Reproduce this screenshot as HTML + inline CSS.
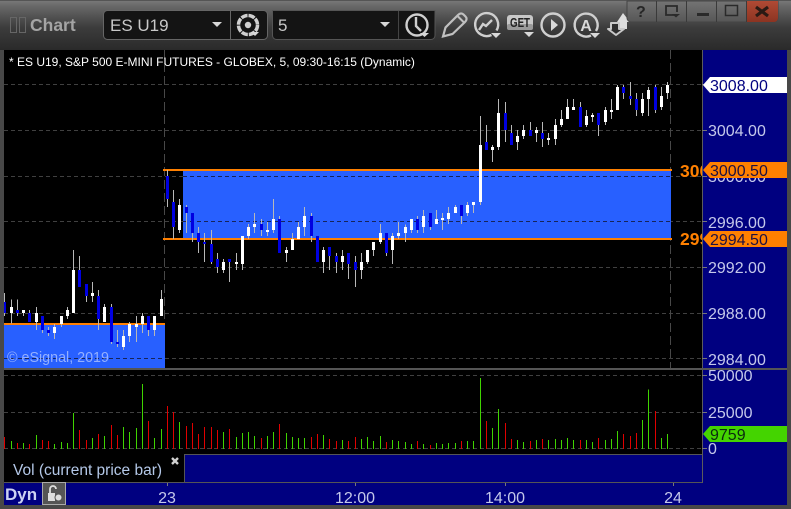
<!DOCTYPE html>
<html><head><meta charset="utf-8"><style>
html,body{margin:0;padding:0;background:#444;width:791px;height:509px;overflow:hidden}
svg{display:block}
text{font-family:"Liberation Sans",sans-serif}
.ax{font-size:16px;fill:#c4c8ea}
.ic{fill:none;stroke:#cfcfcf;stroke-width:2.4}
.ar{fill:#d8d8d8}
</style></head><body>
<svg width="791" height="509" viewBox="0 0 791 509" xmlns="http://www.w3.org/2000/svg">
<defs>
<linearGradient id="tb" x1="0" y1="0" x2="0" y2="1"><stop offset="0" stop-color="#7a7a7a"/><stop offset=".12" stop-color="#686868"/><stop offset=".55" stop-color="#3c3c3c"/><stop offset="1" stop-color="#2a2a2a"/></linearGradient>
<linearGradient id="wb" x1="0" y1="0" x2="0" y2="1"><stop offset="0" stop-color="#747474"/><stop offset="1" stop-color="#565656"/></linearGradient>
<linearGradient id="wr" x1="0" y1="0" x2="0" y2="1"><stop offset="0" stop-color="#b04a34"/><stop offset="1" stop-color="#8c3422"/></linearGradient>
<clipPath id="cc"><rect x="4" y="50" width="698" height="318"/></clipPath>
<clipPath id="cl"><rect x="670" y="150" width="32" height="100"/></clipPath>
</defs>
<rect width="791" height="509" fill="#484848"/>
<rect width="791" height="50" fill="url(#tb)"/>
<rect x="0" y="0" width="791" height="1" fill="#555"/>

<!-- title -->
<rect x="10.5" y="17.5" width="6" height="15" fill="none" stroke="#666"/>
<rect x="19.5" y="17.5" width="6" height="15" fill="none" stroke="#666"/>
<text x="30" y="31" font-size="17.5" font-weight="bold" fill="#a4a4a4">Chart</text>

<!-- combos -->
<rect x="103.5" y="10.5" width="164" height="29" rx="4" fill="#141414" stroke="#666"/>
<path d="M230.5 11V39" stroke="#666"/>
<text x="110" y="31" font-size="17" fill="#c8c8c8">ES U19</text>
<path d="M212 22h10l-5 5z" class="ar" fill="#bbb"/>
<path d="M272.500 10.500H435v25a4 4 0 0 1-4 4H276.500a4 4 0 0 1-4-4z" fill="#141414" stroke="#555"/>
<path d="M398.500 11V39" stroke="#444"/>
<text x="278" y="31" font-size="17" fill="#c8c8c8">5</text>
<path d="M380 22h10l-5 5z" class="ar"/>
<!-- gear -->
<circle cx="248" cy="25" r="9.500" fill="none" stroke="#d0d0d0" stroke-width="3.500" stroke-dasharray="6.500 1"/>
<circle cx="248" cy="25" r="3.200" fill="#d0d0d0"/>
<path d="M251 32h8l-4 4z" class="ar"/>
<!-- clock -->
<circle cx="417" cy="25" r="10.500" class="ic" stroke-width="3"/>
<path d="M416 17v9l5 5" class="ic"/>
<path d="M420 33h9l-4.500 4z" class="ar"/>
<!-- pencil -->
<path d="M443 36.500l2.500-9L458 15c2-2 4-2 5.500-.5l2 2c1.500 1.500 1.500 3.500-.5 5.500L452.500 34z" fill="none" stroke="#c0c0c0" stroke-width="2.200"/>
<path d="M457.500 16l7 7" fill="none" stroke="#c0c0c0" stroke-width="2"/>
<!-- chart circle -->
<path d="M496.500 30.500a11.500 11.500 0 1 0-5 4.500" class="ic" stroke-width="2.600"/>
<path d="M479 30l4-6 3 2 6-6" class="ic" stroke-width="2.200" stroke="#e8e8e8"/>
<path d="M491 33h10l-5 5z" class="ar"/>
<!-- GET -->
<rect x="507" y="15" width="26" height="15" rx="3" fill="#c8c8c8"/>
<rect x="507" y="24" width="26" height="6" rx="2" fill="#9a9a9a"/>
<text x="510" y="27" font-size="13" font-weight="bold" fill="#222" font-family="Liberation Mono" textLength="20" lengthAdjust="spacingAndGlyphs">GET</text>
<path d="M524 32h10l-5 5z" class="ar"/>
<!-- play -->
<circle cx="553" cy="25" r="11.500" class="ic" stroke-width="2.800"/>
<path d="M551 19l7 6-7 6z" fill="#d8d8d8"/>
<!-- A -->
<path d="M596 31a11.500 11.500 0 1 0-5 4.500" class="ic" stroke-width="2.600"/>
<text x="586" y="31" font-size="16" font-weight="bold" fill="#d8d8d8" text-anchor="middle">A</text>
<path d="M590 33h10l-5 5z" class="ar"/>
<!-- arrows -->
<path d="M617 22l6-9 7 9h-3v7h-8v-7z" fill="#ddd"/>
<path d="M611 23h8v6h5l-8 6-8-6h3z" fill="#2d2d2d" stroke="#c8c8c8" stroke-width="2" stroke-linejoin="round"/>

<!-- window buttons -->
<path d="M627 1H778V18a4 4 0 0 1-4 4H631a4 4 0 0 1-4-4z" fill="url(#wb)" stroke="#444"/>
<path d="M746 1H778V18a4 4 0 0 1-4 4H746z" fill="url(#wr)"/>
<path d="M656.500 1V22M686.500 1V22M716.500 1V22M746.500 1V22" stroke="#3a3a3a"/>
<text x="636" y="17" font-size="16" font-weight="bold" fill="#262626">?</text>
<path d="M677 15h-11V6h11v6" fill="none" stroke="#2a2a2a" stroke-width="1.800"/>
<path d="M672 14h8l-4 3.500z" fill="#2a2a2a"/>
<rect x="697" y="13" width="12" height="3" fill="#2a2a2a"/>
<rect x="725.500" y="5.500" width="12" height="10" fill="none" stroke="#2a2a2a" stroke-width="1.500"/>
<path d="M756 7l12 9M768 7l-12 9" stroke="#2a1a14" stroke-width="3.200"/>

<!-- chart area -->
<rect x="4" y="50" width="698" height="318" fill="#000"/>
<rect x="702" y="50" width="85" height="455" fill="#000080"/>
<rect x="4" y="368" width="698" height="86" fill="#000"/>

<g clip-path="url(#cc)" shape-rendering="crispEdges">
<path d="M4 84.500H702M4 130.500H702M4 176.500H702M4 221.500H702M4 267.500H702M4 313.500H702M4 358.500H702" stroke="#404040" stroke-dasharray="4 3"/>
<path d="M164.500 50V368M670.500 50V368" stroke="#484848" stroke-dasharray="9 4"/>
<rect x="183" y="171" width="488" height="68" fill="#2860ff"/>
<rect x="4" y="324" width="161" height="44" fill="#2860ff"/>
<path d="M183 176.500H671M183 221.500H671M4 358.500H165" stroke="#16245a" stroke-dasharray="4 3"/>
<rect x="163" y="169" width="509" height="2" fill="#ff8000"/>
<rect x="163" y="238" width="509" height="2" fill="#ff8000"/>
<rect x="4" y="323" width="161" height="2" fill="#ff8000"/>

<g transform="translate(0.16667,240) scale(.33333)">
<path d="M13 159V228M34 178V250M52 178V228M70 210V228M88 210V246M109 201V270M127 228V279M145 261V288M163 252V297M184 228V261M202 201V237M220 30V219M238 48V141M259 132V186M277 126V186M295 150V270M313 192V246M334 192V312M352 270V321M370 270V330M388 246V306M409 228V306M427 219V279M445 228V288M463 228V288M484 150V228" stroke="#b8b8b8" stroke-width="3" fill="none"/>
<path d="M34 201V219M70 210V219M109 219V246M163 261V279M184 228V252M202 210V228M220 90V219M277 159V168M313 201V246M370 288V321M388 252V288M409 252V261M427 228V252M463 228V270M484 177V228" stroke="#fff" stroke-width="9" fill="none"/>
<path d="M13 186V219M52 210V219M88 219V246M127 228V270M145 270V279M238 90V141M259 132V168M295 168V237M334 201V306M352 306V312M445 228V270" stroke="#0000e0" stroke-width="9" fill="none"/>
</g>
<g transform="translate(150.16667,160) scale(.33333)">
<path d="M52 30V141M70 90V237M88 117V219M109 135V219M127 159V246M145 201V279M163 219V306M184 210V312M202 279V339M220 297V339M238 297V366M259 279V330M277 228V330M295 192V237M313 159V219M334 177V228M352 186V228M370 117V219M388 168V279M409 261V306M427 219V270M445 186V237M463 141V228M484 159V246M502 228V306M520 261V339M538 261V330M559 279V339M577 270V330M595 279V357M616 288V381M634 279V357M652 270V312M670 246V288M691 192V252M709 219V288M727 219V312M745 186V237" stroke="#b8b8b8" stroke-width="3" fill="none"/>
<path d="M88 135V210M220 306V330M259 306V312M277 228V312M295 201V228M313 192V201M352 210V216M370 177V210M409 270V279M427 237V270M445 201V237M463 168V201M520 270V306M577 288V306M634 306V330M652 270V306M670 246V270M691 219V246M727 228V270M745 219V228" stroke="#fff" stroke-width="9" fill="none"/>
<path d="M52 48V117M70 126V201M109 141V159M127 159V219M145 219V246M163 246V252M184 252V306M202 297V321M238 297V306M334 192V210M388 177V279M484 168V228M502 228V306M538 261V288M559 288V306M595 279V312M616 306V330M709 219V279" stroke="#0000e0" stroke-width="9" fill="none"/>
</g>
<g transform="translate(400.16667,80) scale(.33333)">
<path d="M16 433V486M34 417V459M52 408V459M70 390V459M91 399V450M109 390V432M127 399V450M145 381V432M166 375V399M184 375V432M202 366V408M220 366V399M241 108V375M259 135V210M277 195V246M295 57V210M316 66V186M334 135V195M352 150V210M370 135V177M391 126V168M409 141V186M427 126V201M445 159V195M466 117V195M484 90V141M502 57V117M520 57V90M541 66V141M559 90V141M577 99V126M595 99V168M616 81V135M634 57V117M652 15V90M670 15V57M691 6V75M709 39V108M727 39V108M745 21V108M766 15V99M784 21V90M802 6V57" stroke="#b8b8b8" stroke-width="3" fill="none"/>
<path d="M16 441V459M34 417V450M70 408V441M109 417V432M127 414V420M145 399V417M166 381V399M202 375V399M220 366V375M241 195V366M277 201V210M295 99V201M352 168V186M370 150V168M409 150V159M445 174V180M466 135V177M484 117V135M502 81V117M520 81V90M559 108V135M577 105V111M616 90V126M634 90V96M652 21V90M727 57V99M745 30V57M784 48V81M802 15V39" stroke="#fff" stroke-width="9" fill="none"/>
<path d="M52 417V450M91 399V441M184 375V408M259 186V210M316 99V150M334 159V195M391 150V168M427 159V177M541 81V141M595 99V135M670 21V39M691 48V57M709 57V90M766 21V90" stroke="#0000e0" stroke-width="9" fill="none"/>
</g>
</g>

<text x="9" y="66" font-size="12" fill="#fff">* ES U19, S&amp;P 500 E-MINI FUTURES - GLOBEX, 5, 09:30-16:15 (Dynamic)</text>
<text x="7" y="362" font-size="14.300" fill="#94b0ff">© eSignal, 2019</text>

<g clip-path="url(#cl)"><text x="680" y="177" font-size="17.500" font-weight="bold" fill="#ff8000">3000.50</text><text x="680" y="245" font-size="17.500" font-weight="bold" fill="#ff8000">2994.50</text></g>

<!-- volume -->
<g shape-rendering="crispEdges">
<path d="M4 375.500H702M4 412.500H702M4 448.500H702" stroke="#404040" stroke-dasharray="4 3"/>
<g transform="translate(0.16667,370) scale(.33333)" fill="none" stroke-width="3">
<path d="M34 213V237M70 219V237M109 195V237M163 222V237M184 216V237M202 219V237M220 129V237M277 204V237M313 198V237M370 171V237M388 186V237M409 174V237M427 42V237M463 204V237M484 177V237M538 156V237M670 186V237M709 201V237M727 189V237M745 186V237M763 198V237M802 198V237" stroke="#3fd400"/>
<path d="M13 201V237M52 219V237M88 222V237M127 210V237M145 213V237M238 180V237M259 210V237M295 192V237M334 165V237M352 195V237M445 153V237M502 108V237M520 126V237M559 168V237M577 159V237M595 192V237M613 171V237M634 171V237M652 180V237M688 177V237M784 204V237" stroke="#e00000"/>
</g>
<g transform="translate(270.16667,370) scale(.33333)" fill="none" stroke-width="3">
<path d="M10 186V237M49 189V237M67 201V237M85 204V237M103 204V237M160 195V237M217 210V237M274 207V237M292 201V237M310 213V237M331 198V237M367 210V237M385 213V237M406 216V237M424 222V237M460 222V237M499 219V237M517 222V237M535 219V237M556 219V237M592 213V237M610 213V237M631 24V237M667 174V237M685 117V237M742 210V237M760 216V237M799 210V237" stroke="#3fd400"/>
<path d="M28 162V237M124 201V237M142 192V237M178 207V237M199 213V237M235 213V237M256 201V237M349 216V237M442 213V237M481 225V237M574 213V237M649 153V237M706 159V237M724 207V237M781 213V237" stroke="#e00000"/>
</g>
<g transform="translate(540.16667,340) scale(.33333)" fill="none" stroke-width="3">
<path d="M25 300V327M46 297V327M64 300V327M82 294V327M100 300V327M139 300V327M157 306V327M196 300V327M214 297V327M232 273V327M307 240V327M325 148V327M364 294V327M382 282V327" stroke="#3fd400"/>
<path d="M7 297V327M121 300V327M175 294V327M250 282V327M271 288V327M289 279V327M346 213V327" stroke="#e00000"/>
</g>

<!-- legend + x axis -->
<rect x="4" y="454" width="181" height="29" fill="#000"/>
<rect x="185" y="454" width="517" height="28" fill="#000080"/>
<rect x="4" y="483" width="698" height="22" fill="#000080"/>
<rect x="184" y="454" width="518" height="1" fill="#555"/>
<rect x="184" y="454" width="1" height="28" fill="#555"/>
<rect x="4" y="482" width="699" height="1" fill="#555"/>
<rect x="702" y="50" width="1" height="433" fill="#5c5c5c"/>
<rect x="4" y="368" width="783" height="2" fill="#555"/>
<rect x="0" y="505" width="791" height="4" fill="#484848"/>
<rect x="787" y="50" width="4" height="459" fill="#484848"/>
<rect x="0" y="50" width="4" height="459" fill="#484848"/>
<path d="M167.500 483V486M355.500 483V486M505.500 483V486M673.500 483V486" stroke="#777"/>
<path d="M702 84.500H707M702 130.500H707M702 176.500H707M702 221.500H707M702 267.500H707M702 313.500H707M702 358.500H707M702 375.500H707M702 412.500H707M702 448.500H707" stroke="#777"/>
</g>

<path d="M172 458l6 6M178 458l-6 6" stroke="#d0d0d0" stroke-width="2.400"/>
<text x="13" y="475" font-size="15.500" fill="#b4c8e8">Vol (current price bar)</text>
<text x="5" y="500" font-size="17" font-weight="bold" fill="#ccd2f2">Dyn</text>
<rect x="42.500" y="482.500" width="23" height="22" fill="#555" stroke="#aaa"/>
<path d="M50 494v-5a3 3 0 0 1 6 0" fill="none" stroke="#ddd" stroke-width="1.800"/>
<rect x="48" y="493" width="7" height="8" fill="#ddd"/>
<circle cx="58.500" cy="497.500" r="3.500" fill="#ddd" stroke="#555"/>

<g class="ax" text-anchor="middle">
<text x="167" y="503" class="ax">23</text>
<text x="355" y="503" class="ax">12:00</text>
<text x="505" y="503" class="ax">14:00</text>
<text x="673" y="503" class="ax">24</text>
</g>

<!-- y axis labels -->
<text x="708" y="136" class="ax">3004.00</text>
<text x="708" y="182" class="ax">3000.00</text>
<text x="708" y="228" class="ax">2996.00</text>
<text x="708" y="273" class="ax">2992.00</text>
<text x="708" y="319" class="ax">2988.00</text>
<text x="708" y="365" class="ax">2984.00</text>
<text x="708" y="381" class="ax">50000</text>
<text x="708" y="418" class="ax">25000</text>
<text x="708" y="454" class="ax">0</text>

<path d="M703 85l7-8h77v16h-77z" fill="#fff"/>
<text x="710" y="91" font-size="16" fill="#000080">3008.00</text>
<path d="M703 170l7-8h77v16h-77z" fill="#ff8000"/>
<text x="710" y="176" font-size="16" fill="#201040">3000.50</text>
<path d="M703 239l7-8h77v16h-77z" fill="#ff8000"/>
<text x="710" y="245" font-size="16" fill="#201040">2994.50</text>
<path d="M703 434l7-8h77v16h-77z" fill="#44d400"/>
<text x="710" y="440" font-size="16" fill="#0a2a10">9759</text>
</svg>
</body></html>
